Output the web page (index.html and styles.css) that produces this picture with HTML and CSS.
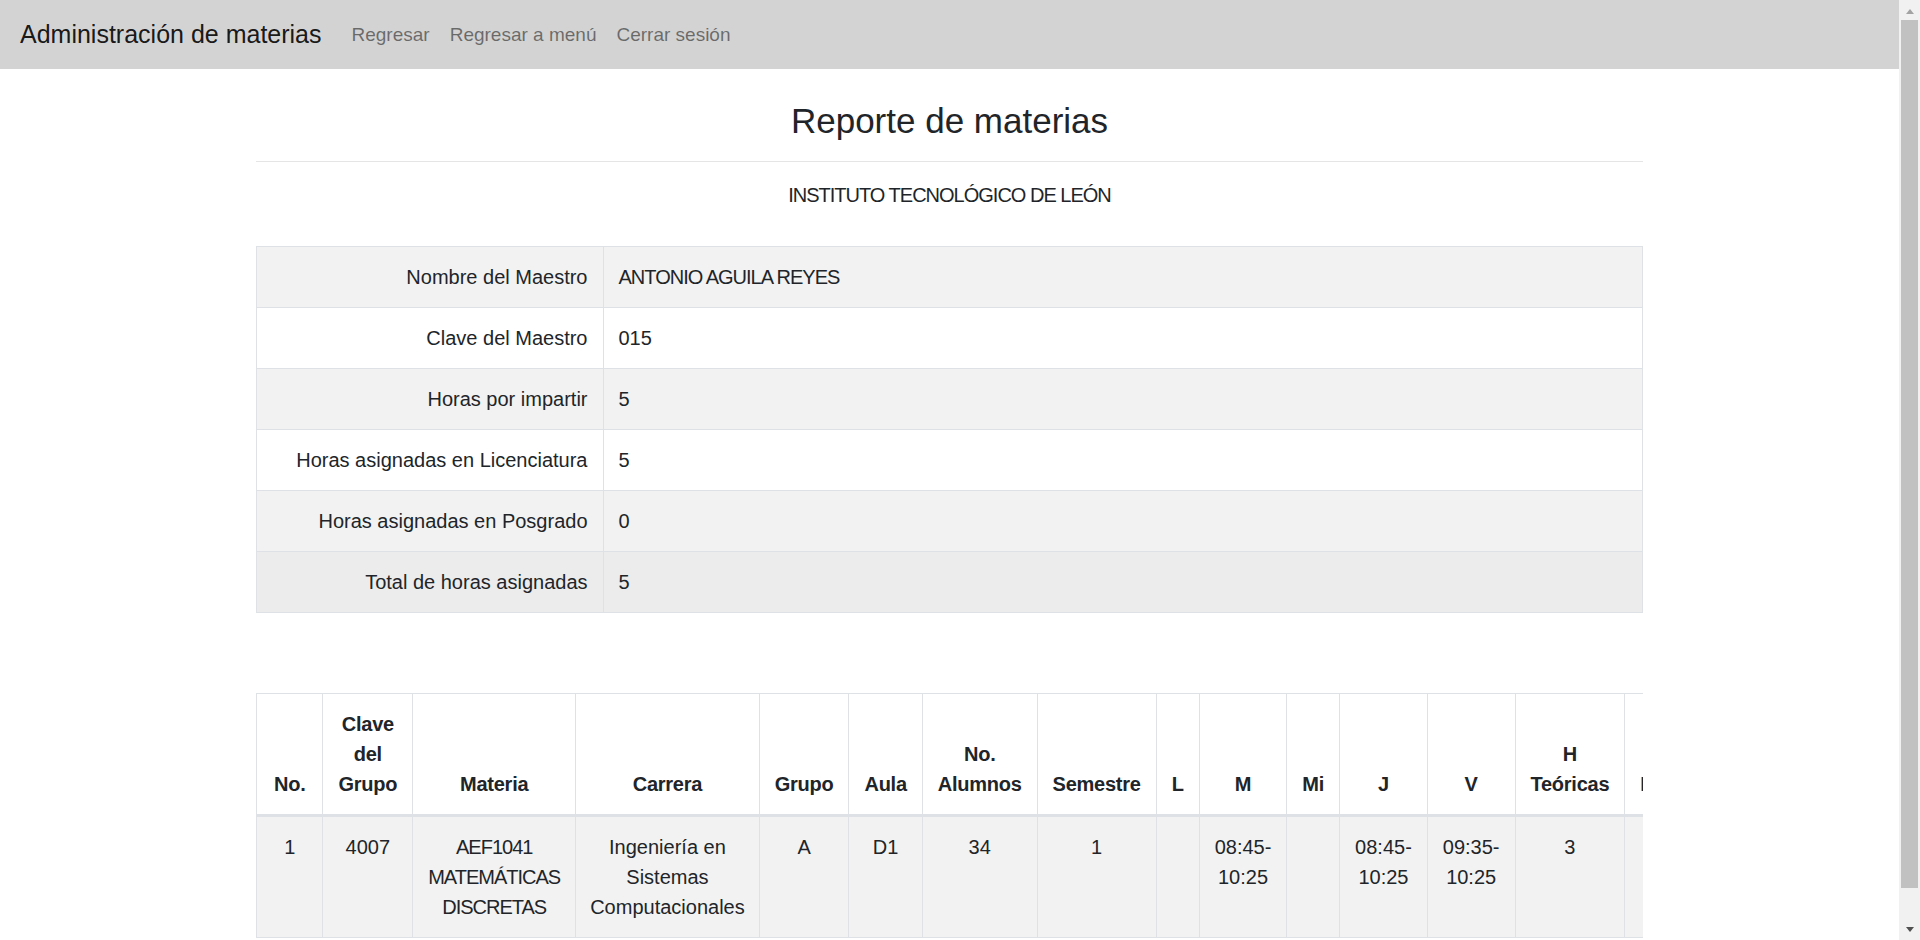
FILE: index.html
```html
<!DOCTYPE html>
<html lang="es">
<head>
<meta charset="utf-8">
<title>Reporte de materias</title>
<link rel="stylesheet" href="styles.css">
</head>
<body>
<div class="page">
  <nav class="navbar">
    <span class="brand">Administración de materias</span>
    <ul class="nav-links">
      <li><a class="nav-link" href="#">Regresar</a></li>
      <li><a class="nav-link" href="#">Regresar a menú</a></li>
      <li><a class="nav-link" href="#">Cerrar sesión</a></li>
    </ul>
  </nav>
  <main class="container">
    <h1 class="title">Reporte de materias</h1>
    <hr class="divider">
    <p class="institute caps">INSTITUTO TECNOLÓGICO DE LEÓN</p>

    <table class="table info-table">
      <tbody>
        <tr><th class="label">Nombre del Maestro</th><td class="caps">ANTONIO AGUILA REYES</td></tr>
        <tr><th class="label">Clave del Maestro</th><td>015</td></tr>
        <tr><th class="label">Horas por impartir</th><td>5</td></tr>
        <tr><th class="label">Horas asignadas en Licenciatura</th><td>5</td></tr>
        <tr><th class="label">Horas asignadas en Posgrado</th><td>0</td></tr>
        <tr class="row-active"><th class="label">Total de horas asignadas</th><td>5</td></tr>
      </tbody>
    </table>

    <div class="table-responsive">
      <table class="table schedule">
        <thead>
          <tr>
            <th class="col-no">No.</th>
            <th>Clave del Grupo</th>
            <th>Materia</th>
            <th class="col-carrera">Carrera</th>
            <th>Grupo</th>
            <th>Aula</th>
            <th>No. Alumnos</th>
            <th>Semestre</th>
            <th>L</th>
            <th>M</th>
            <th>Mi</th>
            <th>J</th>
            <th>V</th>
            <th>H Teóricas</th>
            <th>H Prácticas</th>
            <th>Créditos</th>
          </tr>
        </thead>
        <tbody>
          <tr>
            <td>1</td>
            <td>4007</td>
            <td class="caps">AEF1041 MATEMÁTICAS DISCRETAS</td>
            <td class="col-carrera">Ingeniería en Sistemas Computacionales</td>
            <td>A</td>
            <td>D1</td>
            <td>34</td>
            <td>1</td>
            <td></td>
            <td>08:45-10:25</td>
            <td></td>
            <td>08:45-10:25</td>
            <td>09:35-10:25</td>
            <td>3</td>
            <td>2</td>
            <td>5</td>
          </tr>
        </tbody>
      </table>
    </div>
  </main>
</div>
<div class="scrollbar" aria-hidden="true">
  <div class="sb-btn sb-up"></div>
  <div class="sb-track"><div class="sb-thumb"></div></div>
  <div class="sb-btn sb-down"></div>
</div>
</body>
</html>
```

FILE: styles.css
```css
*, *::before, *::after { box-sizing: border-box; }

html {
  height: 100%;
  overflow: hidden;
}

body {
  margin: 0;
  height: 100%;
  overflow: hidden;
  display: flex;
  font-family: "Liberation Sans", Arial, sans-serif;
  font-size: 20px;
  line-height: 1.5;
  color: #212529;
  background: #fff;
}

.page {
  flex: 1;
  min-width: 0;
}

/* Window scrollbar */
.scrollbar {
  flex: 0 0 21px;
  display: flex;
  flex-direction: column;
  background: #f1f1f1;
}

.sb-btn {
  display: flex;
  align-items: center;
  justify-content: center;
}

.sb-up { height: 20px; padding-top: 2px; }
.sb-down { height: 31px; padding-top: 10px; }

.sb-up::before {
  content: "";
  border-left: 4.5px solid transparent;
  border-right: 4.5px solid transparent;
  border-bottom: 5px solid #a3a3a3;
}

.sb-down::before {
  content: "";
  border-left: 4.5px solid transparent;
  border-right: 4.5px solid transparent;
  border-top: 5px solid #505050;
}

.sb-track {
  flex: 1;
  padding: 0 2px;
}

.sb-thumb {
  height: 868px;
  background: #c1c1c1;
}

/* Navbar */
.navbar {
  display: flex;
  align-items: center;
  height: 69px;
  padding: 10px 20px;
  background: #d3d3d3;
}

.brand {
  font-size: 25px;
  line-height: 37px;
  padding: 6px 0;
  margin-right: 20px;
  color: rgba(0, 0, 0, 0.9);
  white-space: nowrap;
}

.nav-links {
  display: flex;
  list-style: none;
  margin: 0;
  padding: 0;
}

.nav-link {
  display: block;
  padding: 10px;
  font-size: 19px;
  line-height: 30px;
  color: rgba(0, 0, 0, 0.5);
  text-decoration: none;
}

/* Container */
.container {
  max-width: 1425px;
  margin: 0 auto;
  padding: 0 19px;
}

.title {
  margin: 31px 0 0;
  font-size: 35px;
  line-height: 42px;
  font-weight: 400;
  text-align: center;
}

.divider {
  margin: 19px 0 18px;
  border: 0;
  border-top: 1px solid rgba(0, 0, 0, 0.1);
}

.institute {
  margin: 0 0 36px;
  text-align: center;
  line-height: 30px;
}

.caps { letter-spacing: -1px; }

/* Tables */
.table {
  width: 100%;
  border-collapse: collapse;
  color: #212529;
}

.table th,
.table td {
  padding: 15px;
  border: 1px solid #dee2e6;
  line-height: 30px;
}

.info-table {
  margin-bottom: 80px;
}

.info-table .label {
  width: 25%;
  text-align: right;
  font-weight: 400;
}

.info-table td { text-align: left; }

.info-table tbody tr:nth-child(odd) { background: #f2f2f2; }
.info-table tbody tr.row-active { background: #ececec; }

.table-responsive {
  width: 100%;
  overflow-x: auto;
  margin-bottom: 14px;
}

.schedule th,
.schedule td { text-align: center; }

.schedule thead th {
  vertical-align: bottom;
  font-weight: 700;
  letter-spacing: -0.25px;
  border-bottom: 3px solid #dee2e6;
}

.schedule thead th.col-no { padding-left: 17px; padding-right: 17px; }

.schedule .col-carrera { padding-left: 14px; padding-right: 14px; }

.schedule tbody td { vertical-align: top; }

.schedule tbody tr:nth-child(odd) { background: #f2f2f2; }
```
